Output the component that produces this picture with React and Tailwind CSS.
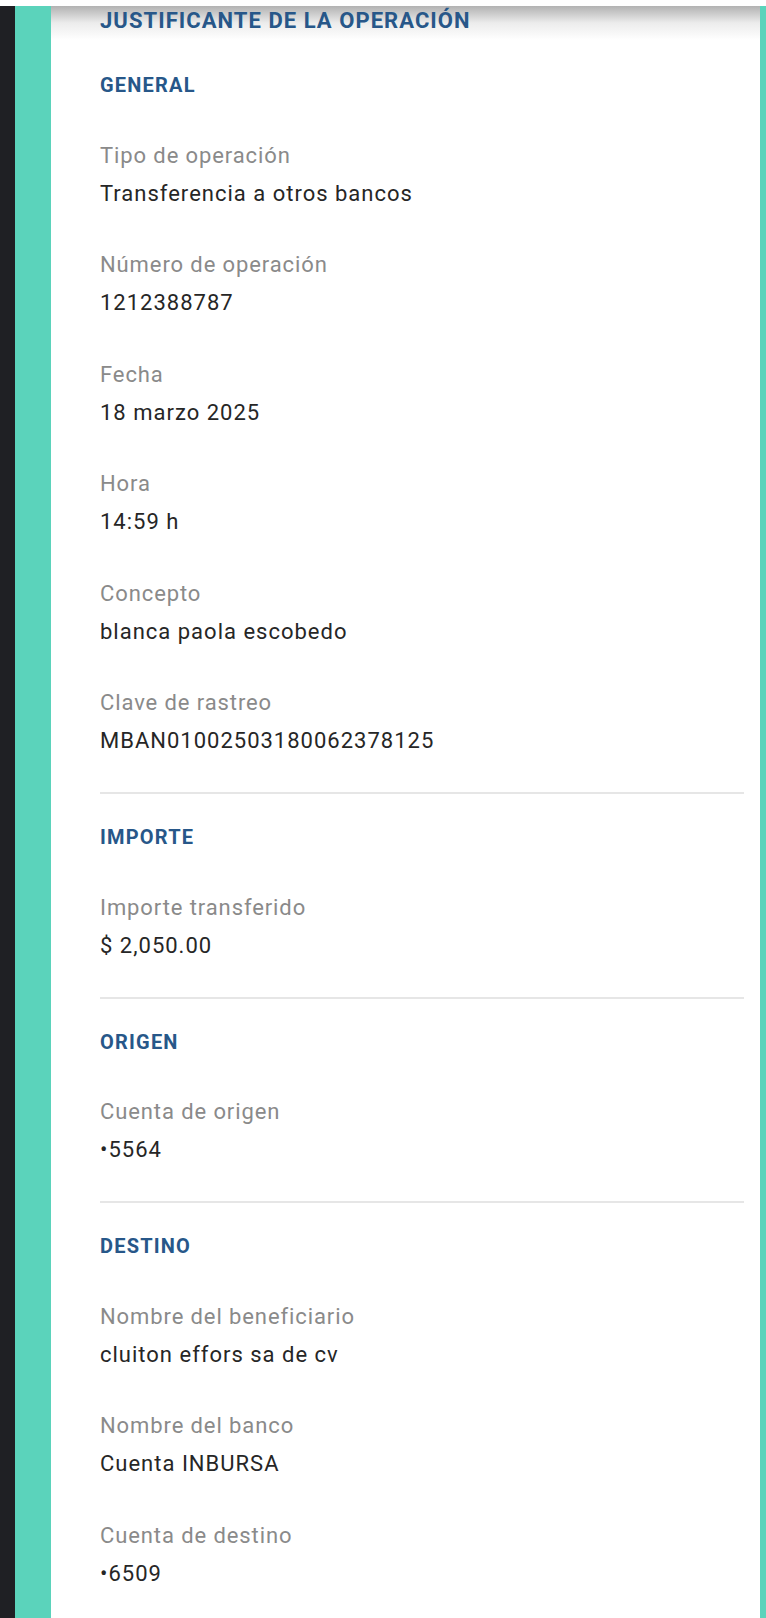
import React from "react";

const sections = [
  {
    title: "GENERAL",
    fields: [
      { label: "Tipo de operación", value: "Transferencia a otros bancos" },
      { label: "Número de operación", value: "1212388787" },
      { label: "Fecha", value: "18 marzo 2025" },
      { label: "Hora", value: "14:59 h" },
      { label: "Concepto", value: "blanca paola escobedo" },
      { label: "Clave de rastreo", value: "MBAN01002503180062378125" },
    ],
  },
  {
    title: "IMPORTE",
    fields: [{ label: "Importe transferido", value: "$ 2,050.00" }],
  },
  {
    title: "ORIGEN",
    fields: [{ label: "Cuenta de origen", value: "•5564" }],
  },
  {
    title: "DESTINO",
    fields: [
      { label: "Nombre del beneficiario", value: "cluiton effors sa de cv" },
      { label: "Nombre del banco", value: "Cuenta INBURSA" },
      { label: "Cuenta de destino", value: "•6509" },
    ],
  },
];

const Field = ({ label, value }) => (
  <div className="flex flex-col">
    <span className="h-[38px] leading-[38px] text-[22px] tracking-[0.9px] text-[#8a8a8a]">{label}</span>
    <span className="h-[38px] leading-[38px] text-[22px] tracking-[1px] text-[#262626]">{value}</span>
  </div>
);

const Section = ({ title, fields, last }) => (
  <div className="flex flex-col">
    <h3 className="h-[30px] leading-[30px] text-[20px] font-bold tracking-[1.2px] text-[#275789]">{title}</h3>
    <div className="mt-[36.5px] flex flex-col gap-[33.5px]">
      {fields.map((f) => (
        <Field key={f.label} {...f} />
      ))}
    </div>
    {!last && <div className="mt-[32px] mb-[28px] mr-[16px] h-[2px] bg-[#e6e6e6]" />}
  </div>
);

export default function App() {
  return (
    <div className="flex h-[1618px] w-full flex-col bg-white font-['Roboto',sans-serif]">
      <div className="h-[6px] bg-white" />
      <div className="flex flex-1">
        <div className="w-[15px] bg-[#1f2024]" />
        <div className="w-[36px] bg-[#5bd3bb]" />
        <main className="relative flex-1 bg-white">
          {/* shadow under the app bar */}
          <div className="absolute inset-x-0 top-0 h-[34px] bg-gradient-to-b from-[#b2b2b2] via-[#ececec] to-white" />
          <div className="relative flex flex-col pl-[49px]">
            <h2 className="h-[30px] leading-[30px] text-[22px] font-bold tracking-[1.05px] text-[#275789]">
              JUSTIFICANTE DE LA OPERACIÓN
            </h2>
            <div className="mt-[34px] flex flex-col">
              {sections.map((s, i) => (
                <Section key={s.title} {...s} last={i === sections.length - 1} />
              ))}
            </div>
          </div>
        </main>
        <div className="w-[6px] bg-[#5bd3bb]" />
      </div>
    </div>
  );
}
